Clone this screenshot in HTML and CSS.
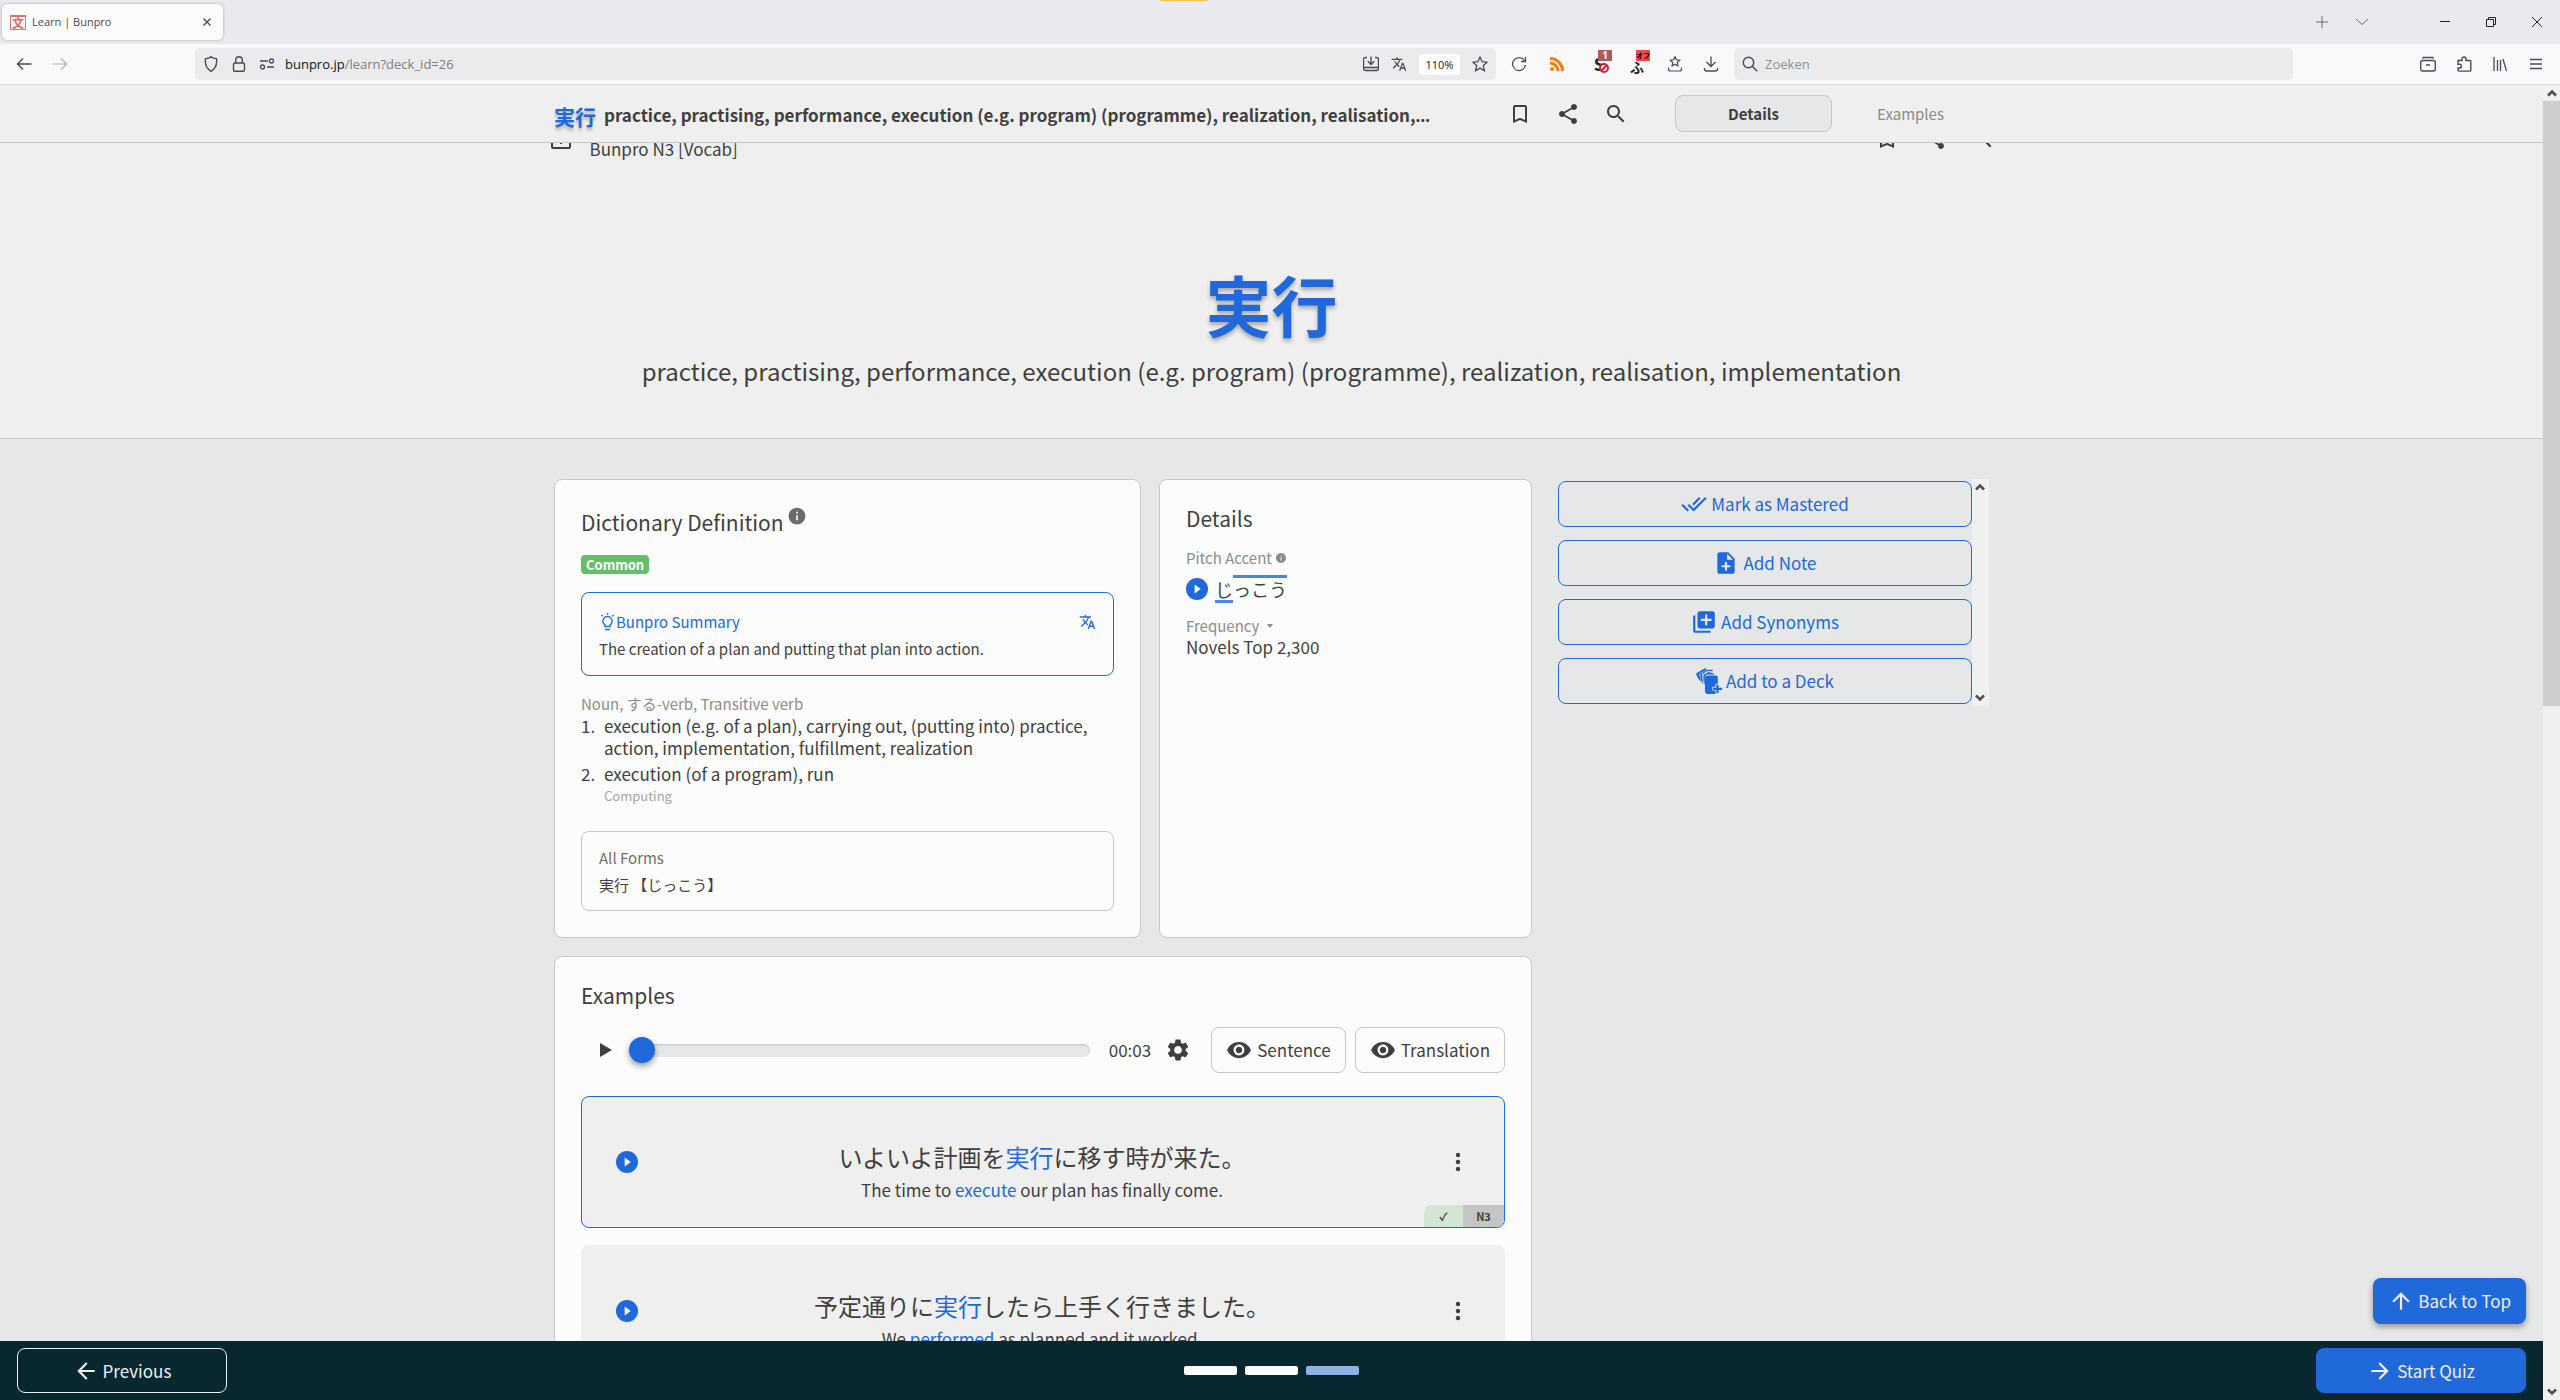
FILE: index.html
```html
<!DOCTYPE html>
<html lang="en">
<head>
    <meta charset="UTF-8">
    <meta name="viewport" content="width=device-width, initial-scale=1.0">
    <title>Learn | Bunpro</title>
    <link rel="stylesheet" href="styles.css">
</head>
<body>
    <!-- Shared icons -->
    <svg class="sprite" aria-hidden="true">
        <symbol id="i-bookmark" viewBox="0 0 24 24"><path d="M17 3H7c-1.100 0-2 .9-2 2v16l7-3 7 3V5c0-1.100-.9-2-2-2zm0 15l-5-2.180L7 18V5h10v13z"/></symbol>
        <symbol id="i-share" viewBox="0 0 24 24"><path d="M18 16.080c-.76 0-1.440.3-1.960.77L8.910 12.700c.05-.23.09-.46.09-.7s-.04-.47-.09-.7l7.050-4.110c.54.5 1.250.81 2.040.81 1.660 0 3-1.340 3-3s-1.340-3-3-3-3 1.340-3 3c0 .24.04.47.09.7L8.040 9.810C7.500 9.310 6.790 9 6 9c-1.660 0-3 1.340-3 3s1.340 3 3 3c.79 0 1.500-.31 2.040-.81l7.120 4.160c-.05.21-.08.43-.08.65 0 1.610 1.310 2.920 2.920 2.920s2.920-1.310 2.920-2.920-1.310-2.920-2.920-2.920z"/></symbol>
        <symbol id="i-search" viewBox="0 0 24 24"><path d="M15.500 14h-.79l-.28-.27C15.410 12.590 16 11.110 16 9.500 16 5.910 13.090 3 9.500 3S3 5.910 3 9.500 5.910 16 9.500 16c1.610 0 3.090-.59 4.230-1.570l.27.28v.79l5 4.990L20.490 19l-4.990-5zm-6 0C7.010 14 5 11.990 5 9.500S7.010 5 9.500 5 14 7.010 14 9.500 11.990 14 9.500 14z"/></symbol>
        <symbol id="i-translate" viewBox="0 0 24 24"><path d="M12.870 15.070l-2.540-2.510.03-.03c1.740-1.940 2.980-4.170 3.710-6.530H17V4h-7V2H8v2H1v1.990h11.170C11.500 7.920 10.440 9.750 9 11.350 8.070 10.320 7.300 9.190 6.690 8h-2c.73 1.630 1.730 3.170 2.980 4.560l-5.090 5.020L4 19l5-5 3.110 3.110.76-2.040zM18.500 10h-2L12 22h2l1.120-3h4.750L21 22h2l-4.500-12zm-2.620 7l1.620-4.330L19.120 17h-3.240z"/></symbol>
        <symbol id="i-info" viewBox="0 0 24 24"><path d="M12 2C6.480 2 2 6.480 2 12s4.480 10 10 10 10-4.480 10-10S17.520 2 12 2zm1 15h-2v-6h2v6zm0-8h-2V7h2v2z"/></symbol>
        <symbol id="i-play" viewBox="0 0 24 24"><circle cx="12" cy="12" r="12"/><path fill="#fcfcfc" d="M9.500 7v10l6.500-5z"/></symbol>
        <symbol id="i-eye" viewBox="0 0 24 24"><path d="M12 4.500C7 4.500 2.730 7.610 1 12c1.730 4.390 6 7.500 11 7.500s9.270-3.110 11-7.500c-1.730-4.390-6-7.500-11-7.500zM12 17c-2.760 0-5-2.240-5-5s2.240-5 5-5 5 2.240 5 5-2.240 5-5 5zm0-8c-1.660 0-3 1.340-3 3s1.340 3 3 3 3-1.340 3-3-1.340-3-3-3z"/></symbol>
        <symbol id="i-more" viewBox="0 0 24 24"><circle cx="12" cy="5" r="2.200"/><circle cx="12" cy="12" r="2.200"/><circle cx="12" cy="19" r="2.200"/></symbol>
        <symbol id="i-arrow" viewBox="0 0 24 24"><path d="M20 11H7.830l5.590-5.590L12 4l-8 8 8 8 1.410-1.410L7.830 13H20v-2z"/></symbol>
        <symbol id="i-up" viewBox="0 0 16 16"><path d="M4 10.500l4-4 4 4" fill="none" stroke="#505050" stroke-width="2.600"/></symbol>
        <symbol id="i-down" viewBox="0 0 16 16"><path d="M4 5.500l4 4 4-4" fill="none" stroke="#505050" stroke-width="2.600"/></symbol>
    </svg>

    <!-- Browser tabs -->
    <div class="tab-strip">
        <div class="tab">
            <span class="favicon" aria-hidden="true">文</span>
            <span class="tab-title">Learn | Bunpro</span>
            <button class="plain" aria-label="Close tab"><svg class="line" viewBox="0 0 16 16"><path d="M4.500 4.500l7 7M11.500 4.500l-7 7" stroke-width="1.400"/></svg></button>
        </div>
        <span class="top-marker"></span>
        <div class="window-tools">
            <button class="plain faded" aria-label="New tab"><svg class="line" viewBox="0 0 16 16"><path d="M8 2v12M2 8h12"/></svg></button>
            <button class="plain faded" aria-label="List tabs"><svg class="line" viewBox="0 0 16 16"><path d="M2 5l6 5.500L14 5"/></svg></button>
        </div>
        <div class="window-buttons">
            <button class="plain" aria-label="Minimise"><svg class="line" viewBox="0 0 16 16"><path d="M3 7.500h10"/></svg></button>
            <button class="plain" aria-label="Restore"><svg class="line" viewBox="0 0 16 16"><path d="M3.500 5.500h7v7h-7zM5.500 5.500v-2h7v7h-2"/></svg></button>
            <button class="plain" aria-label="Close window"><svg class="line" viewBox="0 0 16 16"><path d="M3 3l10 10M13 3L3 13"/></svg></button>
        </div>
    </div>

    <!-- Browser toolbar -->
    <div class="toolbar">
        <div class="nav-buttons">
            <button class="plain" aria-label="Back"><svg class="line" viewBox="0 0 16 16"><path d="M15.500 8H1.500M7 2.500L1.500 8 7 13.500" stroke-width="1.400"/></svg></button>
            <button class="plain faded" aria-label="Forward" disabled><svg class="line" viewBox="0 0 16 16"><path d="M.5 8h14M9 2.500L14.500 8 9 13.500" stroke-width="1.200"/></svg></button>
        </div>
        <div class="url-bar">
            <svg class="line" viewBox="0 0 16 16"><path d="M8 .7c1.500 1.300 3.500 1.800 5.500 1.900.6 5-.5 10-5.500 12.700C3 12.600 1.900 7.600 2.500 2.600 4.500 2.500 6.500 2 8 .7z" stroke-width="1.400"/></svg>
            <svg class="line" viewBox="0 0 16 16"><rect x="2.500" y="7" width="11" height="8.300" rx="1.500" stroke-width="1.400"/><path d="M4.700 7V4a3.300 3.300 0 0 1 6.600 0v3" stroke-width="1.400"/></svg>
            <svg class="line" viewBox="0 0 16 16"><path d="M1 5h8M8 11h7" stroke-width="1.400"/><circle cx="12.500" cy="5" r="2" stroke-width="1.300"/><circle cx="3.500" cy="11" r="2" stroke-width="1.300"/></svg>
            <div class="url" role="textbox" aria-label="Address">bunpro.jp<span>/learn?deck_id=26</span></div>
            <svg class="line" viewBox="0 0 16 16"><path d="M4 1.500H2.500a2 2 0 0 0-2 2v9a2 2 0 0 0 2 2h11a2 2 0 0 0 2-2v-9a2 2 0 0 0-2-2H12M.5 11.500h15M8 .5v7.500M4.800 5.200L8 8.400l3.200-3.200" stroke-width="1.400"/></svg>
            <svg class="fill" viewBox="0 0 24 24"><use href="#i-translate"/></svg>
            <span class="zoom-level">110%</span>
            <svg class="line" viewBox="0 0 16 16"><path d="M8 1l2.100 4.700 5 .5-3.800 3.400 1.100 5.100L8 12.100l-4.400 2.600 1.100-5.100L.9 6.200l5-.5z" stroke-width="1.300"/></svg>
        </div>
        <div class="extensions">
            <button class="plain" aria-label="Reload"><svg class="line" viewBox="0 0 16 16"><path d="M13.500 4.500A6.500 6.500 0 1 0 14.500 9M14.500 1v4.500H10" stroke-width="1.300"/></svg></button>
            <button class="plain" aria-label="RSS"><svg class="rss" viewBox="0 0 16 16"><circle cx="3" cy="13" r="2"/><path d="M1 7a8 8 0 0 1 8 8M1 2.500A12.500 12.500 0 0 1 13.500 15"/></svg></button>
            <button class="plain ext-s" aria-label="Script blocker">S<span class="count">1</span><svg class="blocked" viewBox="0 0 10 10"><circle cx="5" cy="5" r="4"/><path d="M2.500 7.500l5-5"/></svg></button>
            <button class="plain ext-fu" aria-label="Furigana">ふ<span class="count">オフ</span></button>
            <button class="plain" aria-label="Bookmarks"><svg class="line" viewBox="0 0 16 16"><path d="M8 .8l1.500 3 3.200.4-2.400 2.300.6 3.300L8 8.200 5.100 9.800l.6-3.300-2.400-2.300 3.200-.4zM1.500 11.500v1.500a2 2 0 0 0 2 2h9a2 2 0 0 0 2-2v-1.500" stroke-width="1.200"/></svg></button>
            <button class="plain" aria-label="Downloads"><svg class="line" viewBox="0 0 16 16"><path d="M8 .5V10M3.500 6L8 10.500 12.500 6M1.500 12v1a2 2 0 0 0 2 2h9a2 2 0 0 0 2-2v-1" stroke-width="1.300"/></svg></button>
        </div>
        <label class="search-bar">
            <svg class="line" viewBox="0 0 16 16"><circle cx="6.500" cy="6.500" r="5.200" stroke-width="1.400"/><path d="M10.500 10.500l4.800 4.800" stroke-width="1.400"/></svg>
            <input type="search" placeholder="Zoeken" aria-label="Zoeken">
        </label>
        <div class="menu-buttons">
            <button class="plain" aria-label="Archive"><svg class="line" viewBox="0 0 16 16"><rect x=".7" y="4.500" width="14.600" height="10.500" rx="2" stroke-width="1.400"/><path d="M2.500 2.500a1.500 1.500 0 0 1 1-1h9a1.500 1.500 0 0 1 1 1M6 9h4" stroke-width="1.400"/></svg></button>
            <button class="plain" aria-label="Extensions"><svg class="line" viewBox="0 0 16 16"><path d="M2 4.500h4V3a2 2 0 0 1 4 0v1.500h4a.8.8 0 0 1 .8.8v9a.8.8 0 0 1-.8.8H3a1 1 0 0 1-1-1V12h1.500a1.800 1.800 0 0 0 0-3.700H2z" stroke-width="1.400"/></svg></button>
            <button class="plain" aria-label="Library"><svg class="line" viewBox="0 0 16 16"><path d="M2 1v14M5.500 4v11M8.500 4v11M11 3l3.500 12" stroke-width="1.300"/></svg></button>
            <button class="plain" aria-label="Menu"><svg class="line" viewBox="0 0 16 16"><path d="M2 3.500h12M2 8h12M2 12.500h12" stroke-width="1.300"/></svg></button>
        </div>
    </div>

    <div class="window">
        <div class="site">
            <header class="top-bar">
                <div class="top-inner">
                    <h2 class="top-title"><span class="word">実行</span><span class="meaning"><span>practice, practising, performance, execution (e.g. program) (programme), realization, realisation, implementation</span></span></h2>
                    <div class="icon-row">
                        <button class="plain" aria-label="Bookmark"><svg><use href="#i-bookmark"/></svg></button>
                        <button class="plain" aria-label="Share"><svg><use href="#i-share"/></svg></button>
                        <button class="plain" aria-label="Search"><svg><use href="#i-search"/></svg></button>
                    </div>
                    <nav class="tabs">
                        <button class="tab-btn active">Details</button>
                        <button class="tab-btn">Examples</button>
                    </nav>
                </div>
            </header>

            <main class="content">
                <section class="hero">
                    <div class="deck-bar">
                        <svg viewBox="0 0 24 24"><path d="M20 3H4a2 2 0 0 0-2 2v15a2 2 0 0 0 2 2h16a2 2 0 0 0 2-2V5a2 2 0 0 0-2-2zm0 17H4V5h16zM11 8h2v9h-2z"/></svg>
                        <a class="deck-name" href="#">Bunpro N3 [Vocab]</a>
                        <div class="icon-row">
                            <button class="plain" aria-label="Bookmark"><svg><use href="#i-bookmark"/></svg></button>
                            <button class="plain" aria-label="Share"><svg><use href="#i-share"/></svg></button>
                            <button class="plain" aria-label="Search"><svg><use href="#i-search"/></svg></button>
                        </div>
                    </div>
                    <h1>実行</h1>
                    <p class="hero-meaning">practice, practising, performance, execution (e.g. program) (programme), realization, realisation, implementation</p>
                </section>

                <div class="columns">
                    <div class="cards">
                        <section class="card definition">
                            <h2>Dictionary Definition<svg class="info"><use href="#i-info"/></svg></h2>
                            <span class="common">Common</span>
                            <div class="box summary">
                                <div class="summary-head">
                                    <svg viewBox="0 0 16 18"><path d="M5.500 13.500V12A4.600 4.600 0 1 1 10.500 12v1.500zM5.500 16.500h5M8 0v1.800M2 2l1.200 1.200M14 2l-1.200 1.200" fill="none" stroke="currentColor" stroke-width="1.400"/></svg>
                                    <span>Bunpro Summary</span>
                                    <button class="plain" aria-label="Translate"><svg><use href="#i-translate"/></svg></button>
                                </div>
                                <p>The creation of a plan and putting that plan into action.</p>
                            </div>
                            <p class="pos">Noun, する-verb, Transitive verb</p>
                            <ol class="senses">
                                <li>execution (e.g. of a plan), carrying out, (putting into) practice, action, implementation, fulfillment, realization</li>
                                <li>execution (of a program), run<small>Computing</small></li>
                            </ol>
                            <div class="box forms">
                                <h3>All Forms</h3>
                                <p>実行 【じっこう】</p>
                            </div>
                        </section>

                        <section class="card details">
                            <h2>Details</h2>
                            <h3>Pitch Accent<svg class="info"><use href="#i-info"/></svg></h3>
                            <div class="pitch">
                                <button class="plain play" aria-label="Play"><svg><use href="#i-play"/></svg></button>
                                <span class="kana"><span class="low">じ</span><span class="high">っこう</span></span>
                            </div>
                            <h3>Frequency<svg class="caret" viewBox="0 0 6 4"><path d="M0 0h6L3 4z"/></svg></h3>
                            <p>Novels Top 2,300</p>
                        </section>

                        <section class="card examples">
                            <h2>Examples</h2>
                            <div class="player">
                                <button class="plain start" aria-label="Play all"><svg viewBox="0 0 12 14"><path d="M0 0v14l12-7z"/></svg></button>
                                <input type="range" min="0" max="100" value="0" aria-label="Position">
                                <span class="time">00:03</span>
                                <button class="plain gear" aria-label="Settings"><svg viewBox="0 0 24 24"><path d="M19.140 12.940c.04-.3.06-.61.06-.94 0-.32-.02-.64-.07-.94l2.030-1.580c.18-.14.23-.41.12-.61l-1.920-3.320c-.12-.22-.37-.29-.59-.22l-2.390.96c-.5-.38-1.030-.7-1.620-.94l-.36-2.540c-.04-.24-.24-.41-.48-.41h-3.840c-.24 0-.43.17-.47.41l-.36 2.540c-.59.24-1.130.57-1.620.94l-2.390-.96c-.22-.08-.47 0-.59.22L2.740 8.870c-.12.21-.08.47.12.61l2.030 1.580c-.05.3-.09.63-.09.94s.02.64.07.94l-2.030 1.580c-.18.14-.23.41-.12.61l1.920 3.320c.12.22.37.29.59.22l2.390-.96c.5.38 1.030.7 1.620.94l.36 2.540c.05.24.24.41.48.41h3.840c.24 0 .44-.17.47-.41l.36-2.540c.59-.24 1.130-.56 1.620-.94l2.390.96c.22.08.47 0 .59-.22l1.920-3.320c.12-.22.07-.47-.12-.61l-2.010-1.580zM12 15.600c-1.980 0-3.600-1.620-3.600-3.600s1.620-3.600 3.600-3.600 3.600 1.620 3.600 3.600-1.620 3.600-3.600 3.600z"/></svg></button>
                                <button class="toggle"><svg><use href="#i-eye"/></svg>Sentence</button>
                                <button class="toggle"><svg><use href="#i-eye"/></svg>Translation</button>
                            </div>
                            <article class="example current">
                                <button class="plain play" aria-label="Play"><svg><use href="#i-play"/></svg></button>
                                <div class="example-text">
                                    <p class="jp">いよいよ計画を<em>実行</em>に移す時が来た。</p>
                                    <p class="en">The time to <em>execute</em> our plan has finally come.</p>
                                </div>
                                <button class="plain more" aria-label="More"><svg><use href="#i-more"/></svg></button>
                                <div class="level"><span class="known">✓</span><span class="jlpt">N3</span></div>
                            </article>
                            <article class="example">
                                <button class="plain play" aria-label="Play"><svg><use href="#i-play"/></svg></button>
                                <div class="example-text">
                                    <p class="jp">予定通りに<em>実行</em>したら上手く行きました。</p>
                                    <p class="en">We <em>performed</em> as planned and it worked.</p>
                                </div>
                                <button class="plain more" aria-label="More"><svg><use href="#i-more"/></svg></button>
                            </article>
                        </section>
                    </div>

                    <aside class="side">
                        <div class="actions">
                            <button class="action"><svg viewBox="0 0 24 24"><path d="M18 7l-1.410-1.410-6.340 6.340 1.410 1.410L18 7zm4.240-1.410L11.660 16.170 7.480 12l-1.410 1.410L11.660 19l12-12-1.420-1.410zM.41 13.410L6 19l1.410-1.410L1.830 12 .41 13.410z"/></svg>Mark as Mastered</button>
                            <button class="action"><svg viewBox="0 0 24 24"><path d="M14 2H6c-1.100 0-1.990.9-1.990 2L4 20c0 1.100.89 2 1.990 2H18c1.100 0 2-.9 2-2V8l-6-6zm2 14h-3v3h-2v-3H8v-2h3v-3h2v3h3v2zm-3-7V3.500L18.500 9H13z"/></svg>Add Note</button>
                            <button class="action"><svg viewBox="0 0 24 24"><path d="M4 6H2v14c0 1.100.9 2 2 2h14v-2H4V6zm16-4H8c-1.100 0-2 .9-2 2v12c0 1.100.9 2 2 2h12c1.100 0 2-.9 2-2V4c0-1.100-.9-2-2-2zm-1 9h-4v4h-2v-4H9V9h4V5h2v4h4v2z"/></svg>Add Synonyms</button>
                            <button class="action"><svg viewBox="0 0 24 24"><path d="M0 5L8.500 0l1.300 1.500L2.800 5.500 5 13C2.500 11 .8 8 0 5zM3.800 5.500L10.500 1.500l5 .2-.2 1.300-4.800-.2L5.500 6l1.200 9C4.800 12.500 4 9 3.800 5.500zM6.800 6.500L11.500 3.800l5 1.200v1H10L8.200 7.800 8 16C7 13.500 6.800 10 6.800 6.500z"/><path d="M10.500 7H18a2.200 2.200 0 0 1 2.200 2.200v5.300H18v2.700h-3v3.600h3V24h-7.500a2.200 2.200 0 0 1-2.200-2.200V9.200A2.200 2.200 0 0 1 10.500 7z"/><path d="M18.800 15.500h2v2.700H24v2h-3.200V23h-2v-2.800h-3v-2h3z"/></svg>Add to a Deck</button>
                        </div>
                        <div class="side-scroll"><svg><use href="#i-up"/></svg><svg><use href="#i-down"/></svg></div>
                    </aside>
                </div>
            </main>

            <a class="back-top" href="#"><svg class="arrow-up"><use href="#i-arrow"/></svg>Back to Top</a>

            <footer class="bottom-bar">
                <button class="foot-btn"><svg><use href="#i-arrow"/></svg>Previous</button>
                <div class="steps"><span></span><span></span><span class="now"></span></div>
                <button class="foot-btn primary"><svg class="arrow-right"><use href="#i-arrow"/></svg>Start Quiz</button>
            </footer>
        </div>
        <div class="page-scroll"><svg><use href="#i-up"/></svg><div class="thumb"></div><svg><use href="#i-down"/></svg></div>
    </div>
</body>
</html>
```

FILE: styles.css
```css
* {
    box-sizing: border-box;
}
body {
    margin: 0;
    height: 100vh;
    display: flex;
    flex-direction: column;
    overflow: hidden;
    font-family: "Noto Sans CJK JP", sans-serif;
    font-size: 17px;
    line-height: 22px;
    color: #3f3f3f;
    background: #e6e7e9;
}
h1, h2, h3, p, ol {
    margin: 0;
    padding: 0;
    font-weight: normal;
}
em {
    font-style: normal;
    color: #2069da;
}
a {
    color: inherit;
    text-decoration: none;
}
svg {
    display: block;
    flex: none;
    width: 24px;
    height: 24px;
    fill: currentColor;
}
button {
    font: inherit;
    color: inherit;
    cursor: pointer;
}
.plain {
    display: block;
    padding: 0;
    border: 0;
    background: none;
}
.sprite {
    display: none;
}

/* Browser */
.tab-strip, .toolbar {
    flex: none;
    font-family: "Open Sans", sans-serif;
    font-size: 13px;
    line-height: 16px;
    color: #4a4a55;
}
.tab-strip svg, .toolbar svg {
    width: 16px;
    height: 16px;
}
.line {
    fill: none;
    stroke: currentColor;
    stroke-width: 1;
}
.tab-strip {
    position: relative;
    display: flex;
    align-items: center;
    height: 44px;
    padding: 0 15px 0 2px;
    background: #eaeaee;
}
.tab {
    display: flex;
    align-items: center;
    gap: 6px;
    width: 221px;
    height: 36px;
    padding: 0 8px;
    border-radius: 5px;
    background: #fbfbfb;
    box-shadow: 0 0 3px rgba(0, 0, 0, 0.3);
}
.tab-title {
    flex: 1;
    font-size: 11px;
}
.favicon {
    width: 16px;
    height: 15px;
    border: 1px solid #dc7272;
    border-top-width: 2px;
    font: bold 12px/12px "Noto Sans CJK JP", sans-serif;
    text-align: center;
    color: #d86a6a;
}
.top-marker {
    position: absolute;
    top: 0;
    left: calc(50% - 120px);
    width: 48px;
    height: 1px;
    background: #f7c64a;
}
.window-tools {
    display: flex;
    gap: 24px;
    margin-left: auto;
    margin-right: 67px;
}
.window-buttons {
    display: flex;
    gap: 30px;
    color: #222;
}
.faded {
    opacity: 0.8;
}
.toolbar {
    display: grid;
    grid-template-columns: 195px 1301fr 238px 559fr 267px;
    align-items: center;
    height: 41px;
    border-bottom: 1px solid #d3d3d8;
    background: #f9f9fb;
}
.nav-buttons {
    display: flex;
    gap: 20px;
    padding-left: 16px;
}
.nav-buttons .faded {
    opacity: 0.4;
}
.url-bar, .search-bar {
    display: flex;
    align-items: center;
    gap: 12px;
    height: 32px;
    padding: 0 8px;
    border-radius: 5px;
    background: #ebebed;
}
.url {
    flex: 1;
    margin-left: -2px;
    color: #15141a;
    line-height: 18px;
}
.url span {
    color: #7d7d83;
}
.zoom-level {
    width: 41px;
    border-radius: 4px;
    background: #fff;
    font-size: 11px;
    line-height: 21px;
    text-align: center;
    color: #15141a;
}
.extensions {
    display: grid;
    grid-template-columns: 38px 42px 38px 38px 36px 34px;
    padding-left: 15px;
}
.rss {
    fill: #ff7a0f;
    stroke: none;
}
.rss path {
    fill: none;
    stroke: #ff7a0f;
    stroke-width: 3;
}
.ext-s, .ext-fu {
    position: relative;
    width: 16px;
    height: 16px;
    font: bold 17px/16px "Noto Sans CJK JP", sans-serif;
    color: #1c2030;
}
.ext-fu {
    font-size: 14px;
    line-height: 22px;
}
.ext-s .blocked {
    position: absolute;
    right: -2px;
    bottom: -1px;
    width: 10px;
    height: 10px;
    fill: #fff;
    stroke: #d1222f;
    stroke-width: 2;
}
.count {
    position: absolute;
    top: -6px;
    right: -5px;
    width: 14px;
    background: #b05a5c;
    font: bold 10px/11px "Open Sans", sans-serif;
    color: #fff;
}
.ext-fu .count {
    background: #fb4646;
    font: bold 7px/11px "Noto Sans CJK JP", sans-serif;
    color: #000;
}
.search-bar {
    gap: 7px;
}
.search-bar input {
    flex: 1;
    padding: 0;
    border: 0;
    outline: none;
    background: none;
    font: inherit;
}
.search-bar input::placeholder {
    color: #8f8f96;
}
.menu-buttons {
    display: flex;
    justify-content: flex-end;
    gap: 20px;
    padding-right: 16px;
}

/* Page frame */
.window {
    flex: 1;
    min-height: 0;
    display: flex;
}
.site {
    position: relative;
    flex: 1;
    min-width: 0;
    display: flex;
    flex-direction: column;
}
.page-scroll {
    display: flex;
    flex-direction: column;
    align-items: center;
    width: 17px;
    background: #f0f0f0;
}
.page-scroll svg, .side-scroll svg {
    width: 16px;
    height: 16px;
}
.thumb {
    width: 17px;
    height: 46%;
    margin-bottom: auto;
    background: #cdcdcd;
}

/* Sticky bar */
.top-bar {
    flex: none;
    height: 58px;
    border-bottom: 1px solid #c6c7c8;
    background: #efefef;
}
.top-inner {
    display: flex;
    align-items: center;
    max-width: 1435px;
    height: 57px;
    margin: 0 auto;
}
.top-title {
    flex: 1;
    min-width: 0;
    max-width: 902px;
    display: flex;
    align-items: center;
    gap: 8px;
    padding-top: 4px;
    font-size: 17px;
    font-weight: bold;
}
.word {
    flex: none;
    font-size: 21px;
    color: #2069da;
    text-shadow: 0 3px 3px rgba(0, 0, 0, 0.25);
}
/* the outer font supplies a baseline ellipsis */
.meaning {
    display: -webkit-box;
    -webkit-box-orient: vertical;
    -webkit-line-clamp: 1;
    overflow: hidden;
    font-family: "Open Sans", sans-serif;
}
.meaning span {
    font-family: "Noto Sans CJK JP", sans-serif;
}
.icon-row {
    display: flex;
    gap: 24px;
}
.top-inner .icon-row {
    margin-left: 52px;
}
.tabs {
    display: flex;
    margin-left: auto;
}
.tab-btn {
    width: 157px;
    height: 37px;
    padding: 0;
    border: 1px solid transparent;
    border-radius: 8px;
    background: none;
    font-size: 15px;
    color: #8c8c8c;
}
.tab-btn.active {
    border-color: #c6c8ca;
    background: #e6e7e9;
    font-weight: bold;
    color: #3f3f3f;
}

/* Hero */
.content {
    flex: 1;
    min-height: 0;
    overflow: hidden;
}
.hero {
    height: 312px;
    margin-top: -16px;
    border-bottom: 1px solid #c6c7c8;
    background: #efefef;
    text-align: center;
}
.deck-bar {
    display: flex;
    align-items: flex-start;
    gap: 17px;
    max-width: 1446px;
    height: 33px;
    margin: 0 auto;
}
.deck-name {
    align-self: flex-end;
}
.deck-bar .icon-row {
    margin-left: auto;
}
.hero h1 {
    margin-top: 95px;
    font-size: 66px;
    line-height: 96px;
    font-weight: bold;
    color: #2069da;
    text-shadow: 0 3px 4px rgba(0, 0, 0, 0.3);
}
.hero-meaning {
    margin-top: 3px;
    font-size: 24px;
    line-height: 34px;
}

/* Columns */
.columns {
    display: flex;
    align-items: flex-start;
    gap: 26px;
    max-width: 1435px;
    margin: 40px auto 0;
}
.cards {
    flex: 1;
    display: grid;
    grid-template-columns: 587fr 373fr;
    gap: 18px;
}
.card {
    padding: 26px;
    border: 1px solid #c6c7c8;
    border-radius: 8px;
    background: #fcfcfc;
}
.card h2 {
    font-size: 21px;
    line-height: 24px;
}
.card h3 {
    font-size: 15px;
    line-height: 20px;
    color: #8c8c8c;
}
.card.definition h2 {
    display: flex;
    gap: 3px;
    line-height: 32px;
}
.info {
    width: 20px;
    height: 20px;
    color: #6a6a6a;
}
.common {
    display: inline-block;
    margin-top: 17px;
    padding: 0 5px;
    border-radius: 4px;
    background: #67bd69;
    font-size: 13px;
    line-height: 19px;
    font-weight: bold;
    color: #fff;
}
.box {
    padding: 15px 17px 14px;
    border: 1px solid #c6c7c8;
    border-radius: 8px;
    font-size: 15px;
}
.summary {
    margin-top: 18px;
    padding-top: 17px;
    border-color: #2069da;
    line-height: 24px;
}
.summary p {
    margin-top: 3px;
}
.summary-head {
    display: flex;
    align-items: center;
    color: #2069da;
}
.summary-head svg {
    width: 17px;
    height: 18px;
}
.summary-head .plain {
    margin-left: auto;
}
.pos {
    margin-top: 17px;
    font-size: 15px;
    color: #8c8c8c;
}
.senses {
    padding-left: 23px;
    list-style: none;
}
.senses li {
    margin-bottom: 4px;
}
.senses li::before {
    content: counter(list-item) ".";
    display: inline-block;
    width: 23px;
    margin-left: -23px;
}
.senses small {
    display: block;
    font-size: 13px;
    color: #a5a5a5;
}
.forms {
    margin-top: 24px;
}
.forms p {
    margin-top: 5px;
}
.card .forms h3 {
    line-height: 22px;
    color: #707070;
}
.details h3 {
    display: flex;
    align-items: center;
    gap: 3px;
}
.details h2 {
    margin-bottom: 18px;
}
.details .info {
    width: 12px;
    height: 12px;
    color: #8c8c8c;
}
.pitch {
    display: flex;
    align-items: center;
    gap: 7px;
    margin: 7px 0 13px;
}
.play {
    color: #2069da;
}
.play svg {
    width: 22px;
    height: 22px;
}
.kana {
    display: flex;
    font-size: 18px;
}
.low, .high {
    border: solid transparent;
    border-width: 3px 0;
}
.low {
    border-bottom-color: #4a86e0;
}
.high {
    border-top-color: #4a86e0;
}
.details .caret {
    width: 6px;
    height: 4px;
    margin-left: 5px;
}

/* Examples */
.examples {
    grid-column: 1 / 3;
}
.player {
    display: flex;
    align-items: center;
    margin: 20px 0 23px;
    padding-left: 19px;
}
.start svg {
    width: 12px;
    height: 14px;
}
.player input {
    flex: 1;
    appearance: none;
    height: 13px;
    margin: 0 19px 0 17px;
    border-radius: 7px;
    background: #e6e7e9;
    box-shadow: inset 0 1px 2px rgba(0, 0, 0, 0.15);
}
.player input::-webkit-slider-thumb {
    appearance: none;
    width: 26px;
    height: 26px;
    border-radius: 50%;
    background: #2069da;
    box-shadow: 0 3px 6px rgba(0, 0, 0, 0.4);
}
.gear {
    margin: 0 20px 0 14px;
}
.gear svg {
    width: 26px;
    height: 26px;
}
.toggle {
    display: flex;
    align-items: center;
    gap: 5px;
    height: 46px;
    padding: 0 14px;
    border: 1px solid #c6c7c8;
    border-radius: 8px;
    background: none;
}
.toggle + .toggle {
    margin-left: 9px;
}
.toggle svg {
    width: 26px;
    height: 26px;
}
.example {
    position: relative;
    display: flex;
    align-items: center;
    height: 132px;
    padding: 0 34px;
    border: 1px solid #efefef;
    border-radius: 8px;
    overflow: hidden;
    background: #efefef;
}
.example.current {
    border-color: #2069da;
}
.example + .example {
    margin-top: 17px;
}
.example-text {
    flex: 1;
    padding-top: 20px;
    text-align: center;
}
.jp {
    font-size: 24px;
    line-height: 34px;
}
.en {
    margin-top: 2px;
    line-height: 28px;
}
.level {
    position: absolute;
    right: 0;
    bottom: 0;
    display: flex;
    border-top-left-radius: 8px;
    overflow: hidden;
    font-size: 11px;
    line-height: 22px;
    font-weight: bold;
    text-align: center;
}
.known {
    width: 39px;
    background: #d3e6d3;
}
.jlpt {
    width: 41px;
    background: #c5c5c5;
}

/* Side actions */
.side {
    display: flex;
    width: 431px;
}
.actions {
    flex: 1;
    display: flex;
    flex-direction: column;
    gap: 13px;
    padding: 2px 0;
}
.action {
    display: flex;
    align-items: center;
    justify-content: center;
    gap: 4px;
    height: 46px;
    border: 1px solid #2069da;
    border-radius: 8px;
    background: none;
    color: #2069da;
}
.action svg {
    width: 26px;
    height: 26px;
}
.side-scroll {
    display: flex;
    flex-direction: column;
    justify-content: space-between;
    width: 17px;
    background: #f0f0f0;
}

/* Footer */
.bottom-bar {
    flex: none;
    display: flex;
    align-items: center;
    justify-content: space-between;
    height: 59px;
    padding: 0 17px;
    background: #08272f;
}
.foot-btn {
    display: flex;
    align-items: center;
    justify-content: center;
    gap: 4px;
    width: 210px;
    height: 45px;
    border: 1px solid #efefef;
    border-radius: 8px;
    background: none;
    color: #efefef;
}
.foot-btn svg, .back-top svg {
    width: 26px;
    height: 26px;
}
.foot-btn.primary {
    border-color: #2069da;
    background: #2069da;
}
.arrow-right {
    transform: rotate(180deg);
}
.arrow-up {
    transform: rotate(90deg);
}
.steps {
    display: flex;
    gap: 8px;
}
.steps span {
    width: 53px;
    height: 9px;
    border-radius: 2px;
    background: #fcfcfc;
}
.steps .now {
    background: #8fb1ea;
}
.back-top {
    position: absolute;
    right: 17px;
    bottom: 76px;
    display: flex;
    align-items: center;
    gap: 4px;
    height: 46px;
    padding: 0 15px;
    border-radius: 8px;
    background: #2069da;
    box-shadow: 0 3px 6px rgba(0, 0, 0, 0.35);
    color: #efefef;
}
```
